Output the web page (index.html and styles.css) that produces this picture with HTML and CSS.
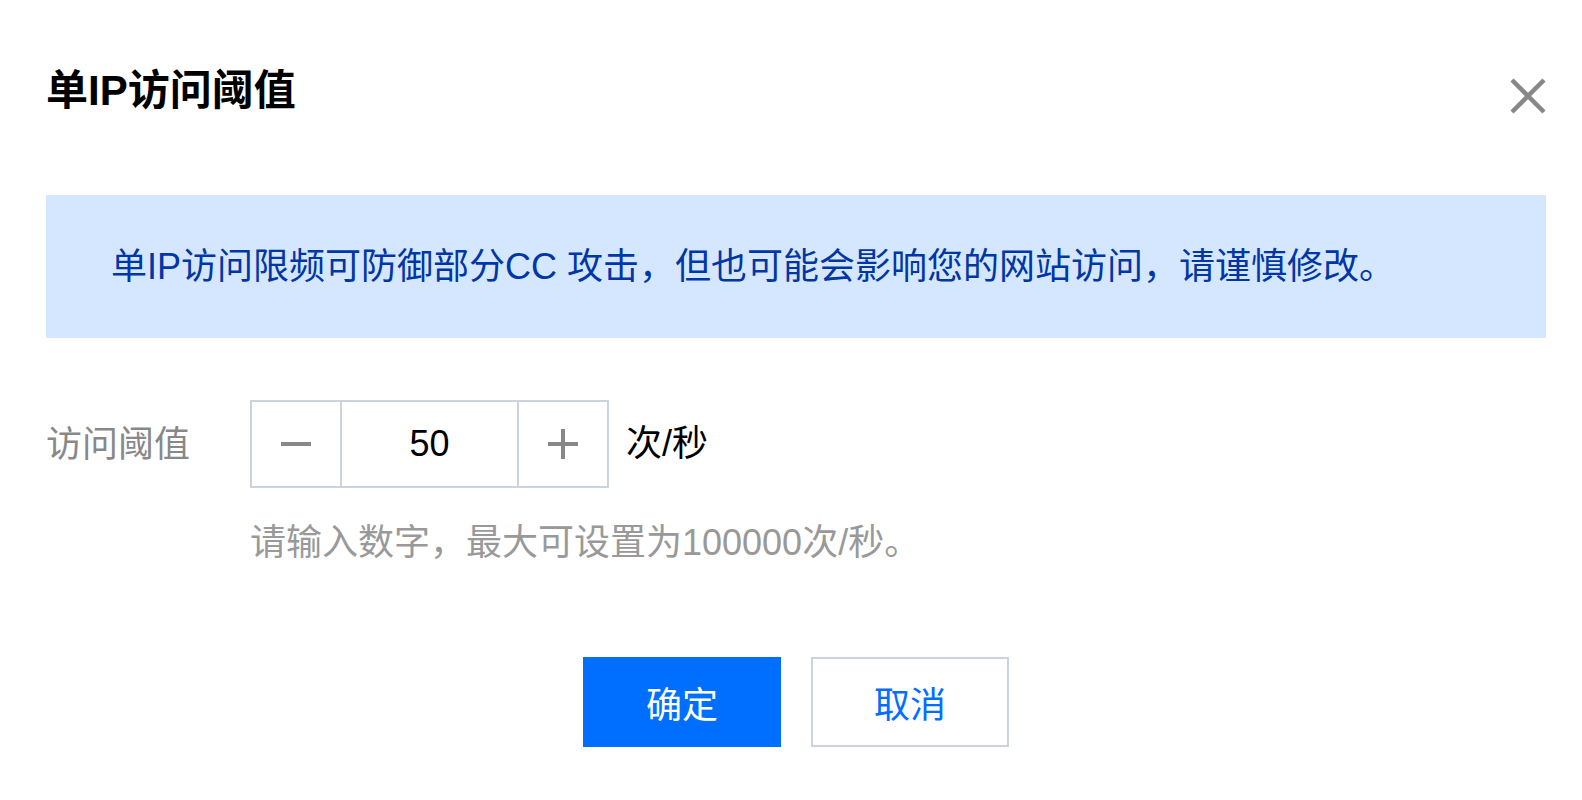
FILE: index.html
```html
<!DOCTYPE html>
<html lang="zh-CN">
<head>
    <meta charset="UTF-8">
    <meta name="viewport" content="width=device-width, initial-scale=1.0">
    <title>单IP访问阈值</title>
    <link rel="stylesheet" href="styles.css">
</head>
<body>
    <div class="dialog">
        <div class="dialog-header">
            <h2 class="dialog-title">单IP访问阈值</h2>
            <button class="close-btn" aria-label="关闭">
                <svg width="36" height="36" viewBox="0 0 36 36">
                    <path d="M2 2 L34 34 M34 2 L2 34" stroke="#888" stroke-width="4.5" fill="none"/>
                </svg>
            </button>
        </div>

        <div class="alert">单IP访问限频可防御部分CC 攻击，但也可能会影响您的网站访问，请谨慎修改。</div>

        <div class="form-row">
            <label class="form-label">访问阈值</label>
            <div class="form-control">
                <div class="input-line">
                    <div class="stepper">
                        <button class="step-btn" aria-label="减少">
                            <svg width="32" height="32" viewBox="0 0 32 32">
                                <rect x="1" y="14" width="30" height="4" fill="#888"/>
                            </svg>
                        </button>
                        <input class="step-input" type="text" value="50">
                        <button class="step-btn" aria-label="增加">
                            <svg width="32" height="32" viewBox="0 0 32 32">
                                <rect x="1" y="14" width="30" height="4" fill="#888"/>
                                <rect x="14" y="1" width="4" height="30" fill="#888"/>
                            </svg>
                        </button>
                    </div>
                    <span class="unit">次/秒</span>
                </div>
                <p class="help">请输入数字，最大可设置为100000次/秒。</p>
            </div>
        </div>

        <div class="dialog-footer">
            <button class="btn btn-primary">确定</button>
            <button class="btn btn-default">取消</button>
        </div>
    </div>
</body>
</html>
```

FILE: styles.css
```css
body {
    margin: 0;
    background-color: #fff;
    font-family: "Liberation Sans", "Noto Sans CJK SC", sans-serif;
    font-size: 36px;
    color: #000;
}
button {
    font-family: inherit;
    cursor: pointer;
}
.dialog {
    padding: 67px 36px 0 46px;
}
.dialog-header {
    display: flex;
    justify-content: space-between;
    align-items: center;
    height: 48px;
}
.dialog-title {
    margin: 0;
    font-size: 42px;
    line-height: 48px;
    font-weight: bold;
    color: #000;
}
.close-btn {
    background: none;
    border: none;
    padding: 0;
    margin-top: 10px;
    display: flex;
}
.alert {
    margin-top: 80px;
    height: 143px;
    display: flex;
    align-items: center;
    padding: 0 65px;
    background-color: #d5e7ff;
    color: #0036a6;
    line-height: 48px;
}
.form-row {
    display: flex;
    margin-top: 62px;
}
.form-label {
    width: 204px;
    flex: none;
    height: 90px;
    line-height: 90px;
    color: #888;
}
.input-line {
    display: flex;
    align-items: center;
    gap: 17px;
}
.stepper {
    display: flex;
    border: 2px solid #cbd3dd;
    height: 84px;
}
.step-btn {
    width: 88px;
    padding: 0;
    border: none;
    background: #fff;
    display: flex;
    align-items: center;
    justify-content: center;
}
.step-input {
    width: 175px;
    border: none;
    border-left: 2px solid #cbd3dd;
    border-right: 2px solid #cbd3dd;
    padding: 0;
    margin: 0;
    font-family: inherit;
    font-size: 36px;
    text-align: center;
    color: #000;
    outline: none;
}
.unit {
    line-height: 48px;
}
.help {
    margin: 31px 0 0;
    line-height: 48px;
    color: #999;
}
.dialog-footer {
    display: flex;
    justify-content: center;
    gap: 30px;
    margin-top: 90px;
}
.btn {
    width: 198px;
    height: 90px;
    font-size: 36px;
    padding: 0;
}
.btn-primary {
    background-color: #006eff;
    border: none;
    color: #fff;
}
.btn-default {
    background-color: #fff;
    border: 2px solid #cbd3dd;
    color: #006eff;
}
```
